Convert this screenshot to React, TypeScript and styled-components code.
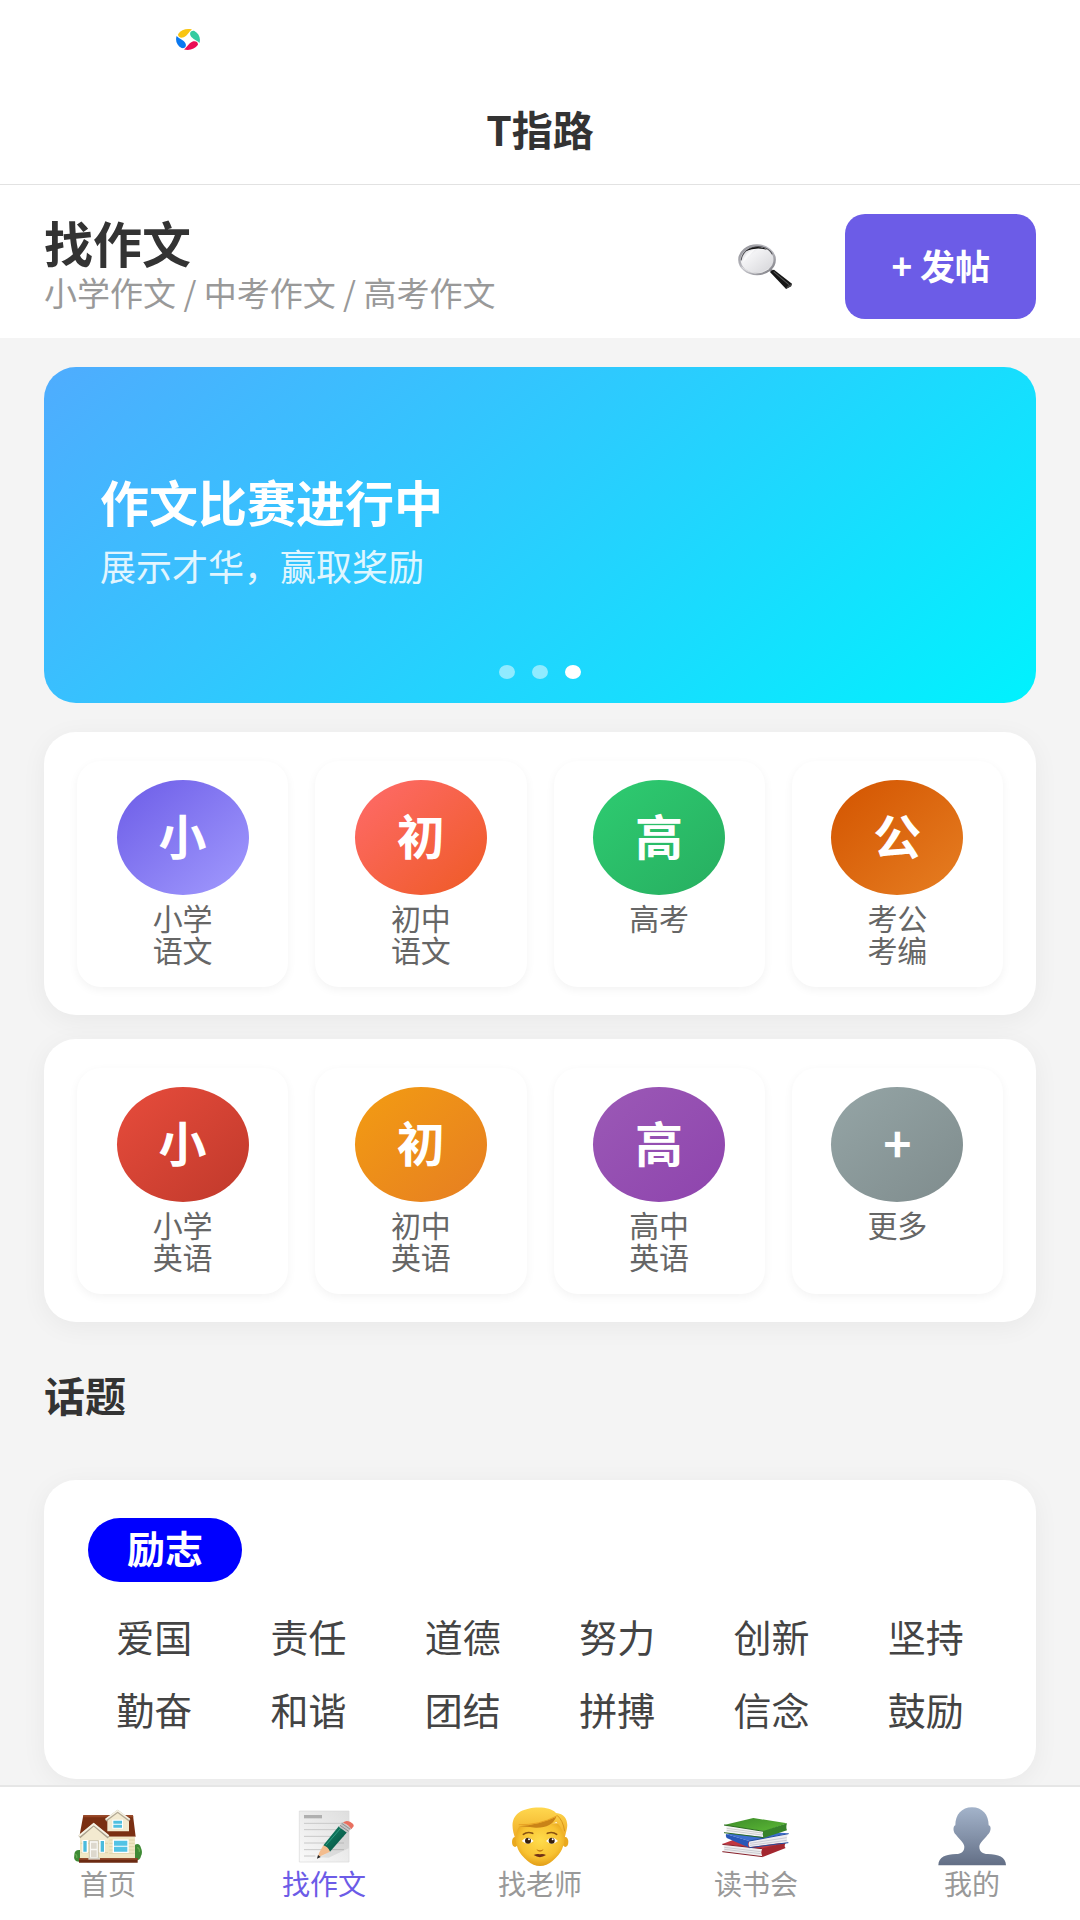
import React from 'react';
import styled, { createGlobalStyle } from 'styled-components';

const GlobalStyle = createGlobalStyle`
  *, *::before, *::after { box-sizing: border-box; }
  body {
    margin: 0;
    background: #f4f4f4;
    color: #333;
    font-family: "Noto Sans CJK SC", "Noto Sans", sans-serif;
  }
  h1, h2, p, ul { margin: 0; padding: 0; }
  ul { list-style: none; }
  a { color: inherit; text-decoration: none; }
  button { font: inherit; border: 0; margin: 0; cursor: pointer; }
`;

const Shell = styled.div`
  display: flex;
  flex-direction: column;
  min-height: 100vh;
`;

const Header = styled.header`
  background: #fff;
  border-bottom: 1px solid #e2e2e2;
`;

const StatusBar = styled.div`
  height: 76px;
  padding: 29px 176px 0;
`;

const AppTitle = styled.h1`
  height: 108px;
  padding-bottom: 4px;
  display: flex;
  align-items: center;
  justify-content: center;
  font-size: 41px;
  line-height: 56px;
  font-weight: 700;
`;

const Toolbar = styled.section`
  display: flex;
  align-items: center;
  gap: 52px;
  padding: 29px 44px 19px;
  background: #fff;
`;

const ToolbarText = styled.div`
  flex: 1;
  align-self: flex-start;
`;

const PageTitle = styled.h2`
  font-size: 49px;
  line-height: 56px;
  font-weight: 700;
`;

const PageSubtitle = styled.p`
  font-size: 33px;
  line-height: 44px;
  color: #999;
`;

const IconButton = styled.button`
  display: flex;
  padding: 0;
  background: none;
`;

const PostButton = styled.button`
  height: 105px;
  padding: 0 46px 4px;
  border-radius: 20px;
  background: #6c5ce7;
  color: #fff;
  font-size: 35px;
  line-height: 48px;
  font-weight: 700;
`;

const Main = styled.main`
  flex: 1;
  padding: 29px 44px 0;
`;

const Banner = styled.section`
  position: relative;
  height: 336px;
  margin-bottom: 29px;
  padding: 0 56px 8px;
  display: flex;
  flex-direction: column;
  justify-content: center;
  gap: 12px;
  border-radius: 32px;
  background: linear-gradient(139deg, #4facfe 0%, #00f2fe 100%);
  color: #fff;
`;

const BannerTitle = styled.h2`
  font-size: 49px;
  line-height: 56px;
  font-weight: 700;
`;

const BannerText = styled.p`
  font-size: 36px;
  line-height: 48px;
  opacity: 0.85;
`;

const Dots = styled.div`
  position: absolute;
  left: 0;
  right: 0;
  bottom: 24px;
  display: flex;
  justify-content: center;
  gap: 17px;
`;

const Dot = styled.button<{ $active?: boolean }>`
  width: 16px;
  height: 14px;
  padding: 0;
  border-radius: 50%;
  background: ${(p) => (p.$active ? '#fff' : 'rgba(255, 255, 255, 0.5)')};
`;

const Card = styled.section`
  border-radius: 32px;
  background: #fff;
  box-shadow: 0 5px 26px rgba(0, 0, 0, 0.05);
`;

const CategoryCard = styled(Card)`
  display: grid;
  grid-template-columns: repeat(4, 1fr);
  gap: 27px;
  margin-bottom: 24px;
  padding: 29px 33px 28px;
`;

const Tile = styled.a`
  display: flex;
  flex-direction: column;
  align-items: center;
  min-height: 226px;
  padding-top: 19px;
  border-radius: 24px;
  background: #fff;
  box-shadow: 0 3px 10px rgba(0, 0, 0, 0.05);
`;

const Badge = styled.span<{ $from: string; $to: string }>`
  display: flex;
  align-items: center;
  justify-content: center;
  width: 132px;
  height: 115px;
  margin-bottom: 6px;
  padding-bottom: 8px;
  border-radius: 50%;
  background: linear-gradient(139deg, ${(p) => p.$from}, ${(p) => p.$to});
  color: #fff;
  font-size: 48px;
  line-height: 56px;
  font-weight: 700;
`;

const TileLabel = styled.span`
  width: 2em;
  font-size: 30px;
  line-height: 32px;
  color: #666;
  text-align: center;
`;

const SectionTitle = styled.h2`
  margin: 44px 0 58px;
  font-size: 41px;
  line-height: 56px;
  font-weight: 700;
`;

const TopicCard = styled(Card)`
  padding: 38px 33px 34px;
`;

const TopicTag = styled.button`
  height: 64px;
  margin: 0 11px 17px;
  padding: 0 39px 6px;
  border-radius: 32px;
  background: #00f;
  color: #fff;
  font-size: 38px;
  line-height: 56px;
  font-weight: 700;
`;

const TopicGrid = styled.ul`
  display: grid;
  grid-template-columns: repeat(6, 1fr);
`;

const Topic = styled.li`
  font-size: 38px;
  line-height: 73px;
  text-align: center;
  color: #444;
`;

const TabBar = styled.nav`
  position: sticky;
  bottom: 0;
  display: grid;
  grid-template-columns: repeat(5, 1fr);
  height: 135px;
  padding-top: 19px;
  border-top: 2px solid #e6e6e6;
  background: #fff;
`;

const Tab = styled.a<{ $active?: boolean }>`
  display: flex;
  flex-direction: column;
  align-items: center;
  font-size: 28px;
  line-height: 34px;
  color: ${(p) => (p.$active ? '#6c5ce7' : '#999')};
`;

const TabIcon = styled.svg`
  display: block;
  width: 72px;
  height: 60px;
`;

const PETAL = 'M16 .6C10.5-1 5 1 2.2 5.6 1.4 8.6 4.2 11 7.8 9.4 11.6 7.6 12.4 3.6 16 .6Z';

const Logo = () => (
  <svg width="24" height="21" viewBox="0 0 24 24" preserveAspectRatio="none" aria-hidden="true">
    <path d={PETAL} fill="#f9c513" />
    <path d={PETAL} fill="#35cba0" transform="rotate(90 12 12)" />
    <path d={PETAL} fill="#ea0f55" transform="rotate(180 12 12)" />
    <path d={PETAL} fill="#0a78f0" transform="rotate(270 12 12)" />
  </svg>
);

const Magnifier = () => (
  <svg width="56" height="47" viewBox="573 186 162 141" preserveAspectRatio="none" aria-hidden="true">
    <defs>
      <linearGradient id="lens" x1="0" y1="0" x2="1" y2="1">
        <stop offset="0" stopColor="#cfcfd4" />
        <stop offset=".35" stopColor="#f3f3f5" />
        <stop offset="1" stopColor="#d2d2d6" />
      </linearGradient>
      <linearGradient id="rim" x1="0" y1="0" x2="1" y2="1">
        <stop offset="0" stopColor="#8a8a90" />
        <stop offset=".5" stopColor="#c4c4ca" />
        <stop offset="1" stopColor="#77777d" />
      </linearGradient>
    </defs>
    <path d="M661 264l9-3 14 12-8 7z" fill="#8d8d92" />
    <path d="M669 274q3-7 11-8l52 42-3 8-14 8z" fill="#161616" />
    <path d="M679 272l44 39" stroke="#555" strokeWidth="3" />
    <path d="M714 324q4-12 18-16l-2 8z" fill="#444" />
    <ellipse cx="631" cy="236" rx="51" ry="43" fill="url(#lens)" stroke="url(#rim)" strokeWidth="7" />
    <path d="M585 238C590 190 660 184 675 220" fill="none" stroke="#55555a" strokeWidth="3" />
    <path d="M598 210q30-22 62-4-32-9-62 4z" fill="#111" />
    <path d="M590 244q6-32 35-39-16 20-35 39z" fill="#fff" opacity=".7" />
    <path d="M586 258q38 35 80 5" fill="none" stroke="#eee" strokeWidth="2" />
  </svg>
);

const HouseIcon = () => (
  <TabIcon viewBox="96 78 216 180" aria-hidden="true">
    <path d="M121 210q-18-2-18 14-4 20 14 21h10zM285 194q14-6 18 10 6 14 0 24-2 14-18 14z" fill="#3f8a35" />
    <path d="M106 222q6 4 4 12M292 202q8 4 6 14" stroke="#63ab4c" strokeWidth="4" fill="none" />
    <path d="M130 106h149l8 64H118z" fill="#7a2f12" />
    <path d="M130 106h149l1 6H129z" fill="#974524" />
    <path d="M120 170h165v66H120z" fill="#f1e7c4" />
    <path d="M208 180h76M208 190h76M208 200h76M208 210h76M208 220h76M122 190h82M122 218h82" stroke="#d8cba0" strokeWidth="2" />
    <path d="M202 120l31-26 34 26v34h-65z" fill="#f3ead0" />
    <path d="M197 121l36-27 36 27" fill="none" stroke="#b3aa95" strokeWidth="8" />
    <path d="M197 118l36-26 36 26" fill="none" stroke="#f6f2e4" strokeWidth="5" />
    <path d="M217 119h32v27h-32z" fill="#fff" />
    <path d="M220 122h26v9h-26zM220 134h26v9h-26z" fill="#4fbfe0" />
    <path d="M121 172l40-36 44 36v12h-84z" fill="#f3ead0" />
    <path d="M118 171l43-37 45 38" fill="none" stroke="#aaa18c" strokeWidth="9" />
    <path d="M117 168l44-36 45 36" fill="none" stroke="#f6f2e4" strokeWidth="6" />
    <path d="M127 180h17v38h-17zM178 180h17v38h-17z" fill="#fff" />
    <path d="M130 183h10v32h-10zM182 183h10v32h-10z" fill="#4bbbdc" />
    <path d="M148 182h27v54h-27z" fill="#faf9f5" stroke="#b8b09c" strokeWidth="2" />
    <path d="M153 188h17v18h-17zM153 211h17v20h-17z" fill="#ddd8cd" />
    <path d="M218 178h48v41h-48z" fill="#fff" />
    <path d="M222 182h40v15h-40zM222 200h40v15h-40z" fill="#52c3e5" />
    <path d="M117 235h176v13H117z" fill="#6b2a12" />
    <path d="M117 235h176v4H117z" fill="#94492a" />
    <path d="M145 233h35v6h-35z" fill="#d5d0c5" />
  </TabIcon>
);

const NoteIcon = () => (
  <TabIcon viewBox="744 78 216 180" aria-hidden="true">
    <defs>
      <linearGradient id="sheet" x1="0" y1="1" x2="1" y2="0">
        <stop offset="0" stopColor="#fafafa" />
        <stop offset="1" stopColor="#dedede" />
      </linearGradient>
      <linearGradient id="pencil" x1="0" y1="0" x2="1" y2="1">
        <stop offset="0" stopColor="#148468" />
        <stop offset=".5" stopColor="#0c6a54" />
        <stop offset="1" stopColor="#07463a" />
      </linearGradient>
    </defs>
    <path d="M778 93h149v153H778z" fill="url(#sheet)" stroke="#d9d9d9" strokeWidth="2" />
    <path d="M792 105h54v10h-54z" fill="#b0b0b0" />
    <path d="M792 130h120M792 149h120M792 169h120M792 189h120M792 209h120M792 228h34" stroke="#c8c8c8" strokeWidth="3" />
    <path d="M836 232q30-10 58-45l34-42-2 60-60 28z" fill="#000" opacity=".08" />
    <path d="M850 196l47-58 24 19-51 58z" fill="url(#pencil)" />
    <path d="M858 195l44-50" stroke="#2c9d83" strokeWidth="3" />
    <path d="M850 196q14 4 20 19l-27 13-10 5 4-14z" fill="#f3bc8e" />
    <path d="M834 225l8 6-11 5z" fill="#222" />
    <path d="M896 140l12-14 26 19-12 14z" fill="#c4c4c4" />
    <path d="M900 136l26 18M905 130l26 18" stroke="#8f8f8f" strokeWidth="3" />
    <path d="M909 128q8-8 21-3 13 7 11 14l-7 9q-6-13-25-20z" fill="#e8705f" />
  </TabIcon>
);

const ManIcon = () => (
  <TabIcon viewBox="72 78 216 180" aria-hidden="true">
    <defs>
      <radialGradient id="face" cx=".5" cy=".4" r=".62">
        <stop offset="0" stopColor="#ffdc4b" />
        <stop offset=".65" stopColor="#f8c232" />
        <stop offset="1" stopColor="#e09a14" />
      </radialGradient>
      <linearGradient id="hair" x1="0" y1="0" x2="0" y2="1">
        <stop offset="0" stopColor="#ffd84f" />
        <stop offset="1" stopColor="#efaa25" />
      </linearGradient>
    </defs>
    <ellipse cx="105" cy="186" rx="9" ry="15" fill="#eaa91f" />
    <ellipse cx="256" cy="186" rx="9" ry="15" fill="#eaa91f" />
    <path d="M107 130H254q5 52-8 78-8 18-28 34-18 16-38 16t-38-16q-20-16-28-34-12-28-7-78z" fill="url(#face)" />
    <path d="M107 178C94 146 92 116 116 98 140 81 205 74 228 99c30 2 38 28 32 50l-7 29q-3-32-24-52-28 20-112 15-8 10-10 37z" fill="url(#hair)" />
    <path d="M115 139q60-4 114-29-14 34-62 33-36-3-52-4z" fill="#c98317" />
    <path d="M116 134q62 2 114-26" fill="none" stroke="#e9a324" strokeWidth="3" />
    <path d="M231 106q18 14 23 48" fill="none" stroke="#d99519" strokeWidth="3" />
    <path d="M130 163q12-9 28-3M202 160q16-6 28 3" fill="none" stroke="#8a5312" strokeWidth="5" strokeLinecap="round" />
    <path d="M125 183q18-20 36 0-17 16-36 0zM198 183q18-20 36 0-18 16-36 0z" fill="#fff" />
    <circle cx="144" cy="182" r="9" fill="#38200f" />
    <circle cx="215" cy="182" r="9" fill="#38200f" />
    <circle cx="147" cy="178" r="3" fill="#fff" />
    <circle cx="218" cy="178" r="3" fill="#fff" />
    <path d="M169 207q11 8 22 0-3 8-11 8t-11-8z" fill="#c17b12" />
    <path d="M161 225q10-4 19-2 9-2 18 2-18 13-37 0z" fill="#6f3018" />
  </TabIcon>
);

const BooksIcon = () => (
  <TabIcon viewBox="720 78 216 180" aria-hidden="true">
    <defs>
      <linearGradient id="green" x1="0" y1="0" x2="1" y2="1">
        <stop offset="0" stopColor="#3c8a29" />
        <stop offset="1" stopColor="#5dbb36" />
      </linearGradient>
    </defs>
    <path d="M727 192l32-12 158 10-70 17z" fill="#c03740" />
    <path d="M847 205l70-17q-6 12 0 16l-69 27q-8-14-1-26z" fill="#a3262f" />
    <path d="M730 194l116 13q-6 11-1 21l-115-13q5-10 0-21z" fill="#eeeef0" />
    <path d="M733 202l109 13M733 208l109 13" stroke="#b9b9c0" strokeWidth="2" />
    <path d="M727 193l119 13M727 215l121 15" stroke="#87202a" strokeWidth="3" />
    <path d="M738 162l60-10 128 8-116 24z" fill="#3c6ed0" />
    <path d="M738 162l70 21q-8 10 0 20l-68-29q-4-5-2-12z" fill="#2857b7" />
    <path d="M809 183l114-20q-4 12 0 23l-114 16q-6-9 0-19z" fill="#ececf1" />
    <path d="M810 190l110-17M810 196l110-15" stroke="#b8bac7" strokeWidth="2" />
    <path d="M808 183l118-22M808 203l117-15" stroke="#224d9e" strokeWidth="3" />
    <path d="M732 135l88-21 101 16-70 25z" fill="url(#green)" />
    <path d="M850 153l71-23q-4 12 0 21l-70 23q-8-12-1-21z" fill="#37832a" />
    <path d="M738 137l112 16q-5 10 0 18l-112-12q5-11 0-22z" fill="#f2f2f2" />
    <path d="M740 145l106 14M740 151l106 14" stroke="#bdbdbd" strokeWidth="2" />
    <path d="M732 135l119 19M732 158l119 15" stroke="#2c6b20" strokeWidth="3" />
  </TabIcon>
);

const ProfileIcon = () => (
  <TabIcon viewBox="348 318 216 180" aria-hidden="true">
    <defs>
      <linearGradient id="bust" x1="0" y1="0" x2="0" y2="1">
        <stop offset="0" stopColor="#a3b3ca" />
        <stop offset=".5" stopColor="#8492a9" />
        <stop offset="1" stopColor="#626e85" />
      </linearGradient>
    </defs>
    <path
      d="M456 322c-31 0-50 22-50 54-8 3-7 22 2 28 8 12 25 24 25 36 0 15-10 21-24 22-32 1-53 8-54 34h203c-1-26-23-33-55-34-14-1-25-7-25-22 0-12 17-24 25-36 9-6 13-25 3-28 0-32-19-54-50-54z"
      fill="url(#bust)"
    />
  </TabIcon>
);

type Category = { mark: string; label: string; from: string; to: string };

const CHINESE: Category[] = [
  { mark: '小', label: '小学语文', from: '#6c5ce7', to: '#a29bfe' },
  { mark: '初', label: '初中语文', from: '#ff6b6b', to: '#ee5a24' },
  { mark: '高', label: '高考', from: '#2ecc71', to: '#27ae60' },
  { mark: '公', label: '考公考编', from: '#d35400', to: '#e67e22' },
];

const ENGLISH: Category[] = [
  { mark: '小', label: '小学英语', from: '#e74c3c', to: '#c0392b' },
  { mark: '初', label: '初中英语', from: '#f39c12', to: '#e67e22' },
  { mark: '高', label: '高中英语', from: '#9b59b6', to: '#8e44ad' },
  { mark: '+', label: '更多', from: '#95a5a6', to: '#7f8c8d' },
];

const TOPICS = ['爱国', '责任', '道德', '努力', '创新', '坚持', '勤奋', '和谐', '团结', '拼搏', '信念', '鼓励'];

const TABS = [
  { label: '首页', Icon: HouseIcon },
  { label: '找作文', Icon: NoteIcon, active: true },
  { label: '找老师', Icon: ManIcon },
  { label: '读书会', Icon: BooksIcon },
  { label: '我的', Icon: ProfileIcon },
];

const Categories = ({ items }: { items: Category[] }) => (
  <CategoryCard>
    {items.map((item) => (
      <Tile key={item.label} href="#">
        <Badge $from={item.from} $to={item.to}>{item.mark}</Badge>
        <TileLabel>{item.label}</TileLabel>
      </Tile>
    ))}
  </CategoryCard>
);

export default function App() {
  return (
    <Shell>
      <GlobalStyle />
      <Header>
        <StatusBar>
          <Logo />
        </StatusBar>
        <AppTitle>T指路</AppTitle>
      </Header>
      <Toolbar>
        <ToolbarText>
          <PageTitle>找作文</PageTitle>
          <PageSubtitle>小学作文 / 中考作文 / 高考作文</PageSubtitle>
        </ToolbarText>
        <IconButton type="button" aria-label="搜索">
          <Magnifier />
        </IconButton>
        <PostButton type="button">+ 发帖</PostButton>
      </Toolbar>
      <Main>
        <Banner>
          <BannerTitle>作文比赛进行中</BannerTitle>
          <BannerText>展示才华，赢取奖励</BannerText>
          <Dots>
            <Dot type="button" aria-label="1" />
            <Dot type="button" aria-label="2" />
            <Dot type="button" aria-label="3" $active />
          </Dots>
        </Banner>
        <Categories items={CHINESE} />
        <Categories items={ENGLISH} />
        <SectionTitle>话题</SectionTitle>
        <TopicCard>
          <TopicTag type="button">励志</TopicTag>
          <TopicGrid>
            {TOPICS.map((topic) => (
              <Topic key={topic}>
                <a href="#">{topic}</a>
              </Topic>
            ))}
          </TopicGrid>
        </TopicCard>
      </Main>
      <TabBar>
        {TABS.map(({ label, Icon, active }) => (
          <Tab key={label} href="#" $active={active}>
            <Icon />
            {label}
          </Tab>
        ))}
      </TabBar>
    </Shell>
  );
}
